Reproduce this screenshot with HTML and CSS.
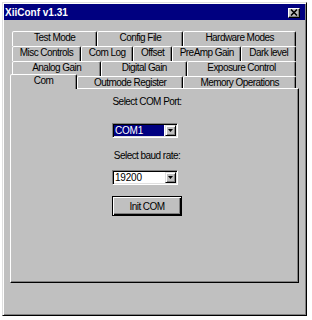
FILE: index.html
```html
<!DOCTYPE html>
<html lang="en">

<head>
    <meta charset="UTF-8">
    <title>XiiConf v1.31</title>
    <link rel="stylesheet" href="styles.css">
</head>

<body>
    <div class="window">
        <div class="titlebar">
            <h1>XiiConf v1.31</h1>
            <div class="close">
                <svg width="8" height="7" viewBox="0 0 8 7"><path d="M1 0.5 L7 6.5 M7 0.5 L1 6.5" stroke="#000" stroke-width="1.6"/></svg>
            </div>
        </div>
        <div class="dialog">
            <div class="tabrow">
                <div class="tab">Test Mode</div>
                <div class="tab">Config File</div>
                <div class="tab">Hardware Modes</div>
            </div>
            <div class="tabrow">
                <div class="tab">Misc Controls</div>
                <div class="tab">Com Log</div>
                <div class="tab">Offset</div>
                <div class="tab">PreAmp Gain</div>
                <div class="tab">Dark level</div>
            </div>
            <div class="tabrow">
                <div class="tab">Analog Gain</div>
                <div class="tab">Digital Gain</div>
                <div class="tab">Exposure Control</div>
            </div>
            <div class="tabrow front">
                <div class="tab active">Com</div>
                <div class="tab">Outmode Register</div>
                <div class="tab">Memory Operations</div>
            </div>
            <div class="panel">
                <div class="form">
                    <div class="label first">Select COM Port:</div>
                    <div class="combo port">
                        <span class="value selected">COM1</span>
                        <span class="arrow"><svg width="5" height="3" viewBox="0 0 5 3"><path d="M0 0 H5 L2.5 3 Z" fill="#000"/></svg></span>
                    </div>
                    <div class="label second">Select baud rate:</div>
                    <div class="combo baud">
                        <span class="value">19200</span>
                        <span class="arrow"><svg width="5" height="3" viewBox="0 0 5 3"><path d="M0 0 H5 L2.5 3 Z" fill="#000"/></svg></span>
                    </div>
                    <button type="button" class="btn">Init COM</button>
                </div>
            </div>
        </div>
    </div>
</body>

</html>
```

FILE: styles.css
```css
body {
    margin: 0;
    background: #fff;
    font-family: "Liberation Sans", Arial, sans-serif;
    font-size: 10px;
    letter-spacing: -0.55px;
    color: #000;
}

.window {
    margin: 2px 0 0 2px;
    width: 305px;
    height: 314px;
    box-sizing: border-box;
    padding: 1px;
    background: #c0c0c0;
    border: 1px solid;
    border-color: #dfdfdf #000 #000 #dfdfdf;
    box-shadow: inset 1px 1px #fff, inset -1px -1px #808080;
}

.titlebar {
    height: 16px;
    background: #000080;
    display: flex;
    align-items: center;
    justify-content: space-between;
    padding: 0 5px 0 1px;
    color: #fff;
}

.titlebar h1 {
    margin: 0;
    font-size: 10px;
    font-weight: bold;
    letter-spacing: 0;
}

.titlebar .close {
    width: 12px;
    height: 10px;
    margin-top: 1px;
    box-sizing: border-box;
    background: #c0c0c0;
    border: 1px solid;
    border-color: #fff #000 #000 #fff;
    box-shadow: inset -1px -1px #808080;
    display: flex;
    align-items: center;
    justify-content: center;
}

.titlebar .close svg {
    display: block;
}

.dialog {
    padding: 11px 6px 0 6px;
}

.tabrow {
    display: flex;
    height: 15px;
    margin: 0 3px 0 2px;
}

.tab {
    flex: 1 1 auto;
    box-sizing: border-box;
    text-align: center;
    line-height: 12px;
    white-space: nowrap;
    border: 1px solid;
    border-bottom: 0;
    border-color: #fff #000 transparent #fff;
    border-radius: 2px 2px 0 0;
    box-shadow: inset -1px 0 #808080;
    background: #c0c0c0;
}

.tabrow.front {
    height: 14px;
    margin: -2px 3px 0 0;
    align-items: flex-end;
}

.tabrow.front .tab {
    height: 12px;
    line-height: 11px;
}

.tabrow.front .tab.active {
    flex: 0 0 67px;
    height: 15px;
    margin-bottom: -1px;
    line-height: 11px;
    position: relative;
    z-index: 1;
}

.panel {
    height: 195px;
    box-sizing: border-box;
    border: 1px solid;
    border-color: #fff #000 #000 #fff;
    box-shadow: inset -1px -1px #808080;
}

.form {
    width: 70px;
    margin-left: 101px;
    padding-top: 7px;
    display: flex;
    flex-direction: column;
    align-items: flex-start;
}

.label {
    width: 70px;
    text-align: center;
    line-height: 11px;
    white-space: nowrap;
}

.label.second {
    margin-top: 12px;
}

.combo {
    width: 66px;
    height: 15px;
    box-sizing: border-box;
    display: flex;
    padding: 1px;
    background: #fff;
    border: 1px solid;
    border-color: #808080 #fff #fff #808080;
    box-shadow: inset 1px 1px #000, inset -1px -1px #dfdfdf;
}

.combo.port {
    margin-top: 16px;
}

.combo.baud {
    margin-top: 9px;
}

.combo .value {
    flex: 1;
    line-height: 11px;
    padding-left: 1px;
    letter-spacing: -0.2px;
}

.combo .value.selected {
    background: #000080;
    color: #fff;
    margin: 0 1px 0 0;
}

.combo .arrow {
    width: 11px;
    height: 11px;
    box-sizing: border-box;
    background: #c0c0c0;
    border: 1px solid;
    border-color: #dfdfdf #000 #000 #dfdfdf;
    box-shadow: inset 1px 1px #fff, inset -1px -1px #808080;
    display: flex;
    align-items: center;
    justify-content: center;
}

.combo .arrow svg {
    display: block;
}

.btn {
    margin-top: 11px;
    width: 70px;
    height: 20px;
    padding: 0;
    font: inherit;
    letter-spacing: -0.55px;
    color: #000;
    background: #c0c0c0;
    border: 1px solid #000;
    box-shadow: inset 1px 1px #fff, inset -1px -1px #000, inset -2px -2px #808080;
}
```
